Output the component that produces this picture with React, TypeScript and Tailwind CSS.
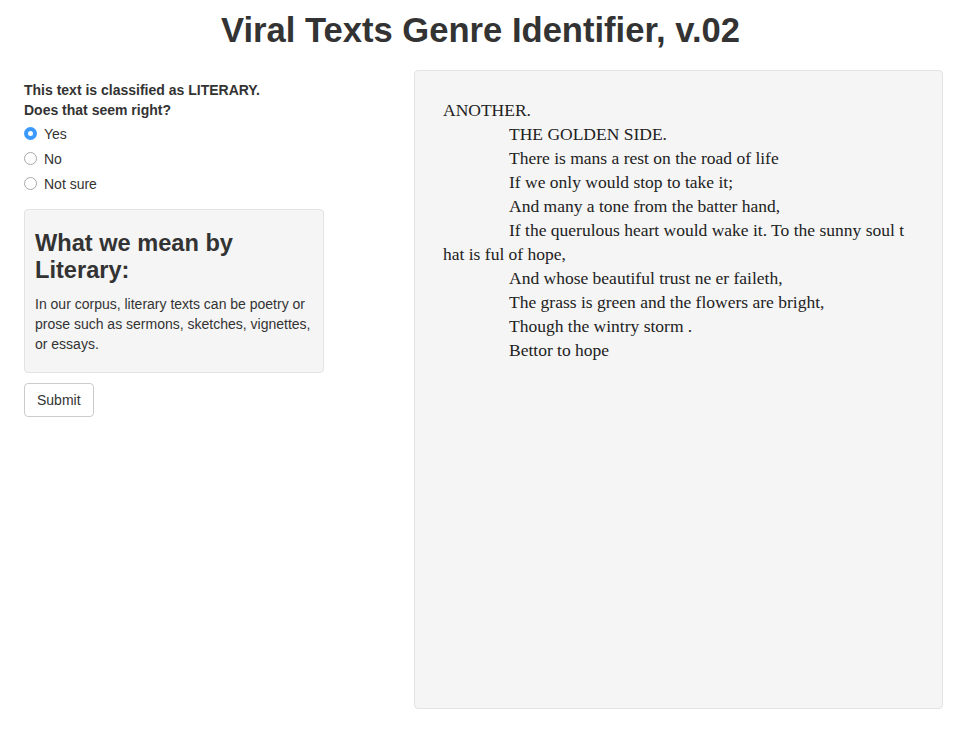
import React from "react";

const lines: { text: string; indent: boolean }[] = [
  { text: "ANOTHER.", indent: false },
  { text: "THE GOLDEN SIDE.", indent: true },
  { text: "There is mans a rest on the road of life", indent: true },
  { text: "If we only would stop to take it;", indent: true },
  { text: "And many a tone from the batter hand,", indent: true },
  { text: "If the querulous heart would wake it. To the sunny soul t", indent: true },
  { text: "hat is ful of hope,", indent: false },
  { text: "And whose beautiful trust ne er faileth,", indent: true },
  { text: "The grass is green and the flowers are bright,", indent: true },
  { text: "Though the wintry storm .", indent: true },
  { text: "Bettor to hope", indent: true },
];

const options = ["Yes", "No", "Not sure"];

const App: React.FC = () => {
  return (
    <div
      className="min-h-[741px] bg-white text-[#333] text-sm"
      style={{ fontFamily: '"Liberation Sans", Arial, sans-serif' }}
    >
      <h1 className="pt-[10px] text-center text-[34.6px] leading-[40px] font-bold">
        Viral Texts Genre Identifier, v.02
      </h1>
      <div className="flex pt-[20px] pl-[24px] pr-[18px]">
        {/* Sidebar */}
        <div className="w-[300px] shrink-0 pt-[10px]">
          <div className="font-bold leading-[20px]">
            This text is classified as LITERARY.
            <br />
            Does that seem right?
          </div>
          <div className="mt-[1px] flex flex-col">
            {options.map((opt, i) => (
              <label key={opt} className="flex items-center h-[25px] gap-[7px]">
                {i === 0 ? (
                  <span className="w-[13px] h-[13px] rounded-full bg-[#3b99fc] flex items-center justify-center">
                    <span className="w-[5px] h-[5px] rounded-full bg-white" />
                  </span>
                ) : (
                  <span className="w-[13px] h-[13px] rounded-full border border-[#a9a9a9] bg-white" />
                )}
                <span>{opt}</span>
              </label>
            ))}
          </div>
          <div className="mt-[13px] bg-[#f5f5f5] border border-[#e3e3e3] rounded-[4px] pl-[10px] pr-[10px] pt-[20px] pb-[20px] h-[164px]">
            <h3 className="text-[23.6px] leading-[27px] font-bold">
              What we mean by Literary:
            </h3>
            <p className="mt-[10px] leading-[20px]">
              In our corpus, literary texts can be poetry or prose such as sermons, sketches, vignettes, or essays.
            </p>
          </div>
          <button className="mt-[10px] h-[34px] px-[12px] border border-[#ccc] rounded-[4px] bg-white text-[#333]">
            Submit
          </button>
        </div>
        {/* Main */}
        <div className="ml-[90px] flex-1 h-[639px] bg-[#f5f5f5] border border-[#e3e3e3] rounded-[4px] pl-[28px] pr-[20px] pt-[27px]">
          <div
            className="text-[17.5px] leading-[24px] text-[#222]"
            style={{ fontFamily: '"Liberation Serif", Georgia, serif' }}
          >
            {lines.map((l, i) => (
              <div key={i} className={l.indent ? "pl-[66px]" : ""}>
                {l.text}
              </div>
            ))}
          </div>
        </div>
      </div>
    </div>
  );
};

export default App;
